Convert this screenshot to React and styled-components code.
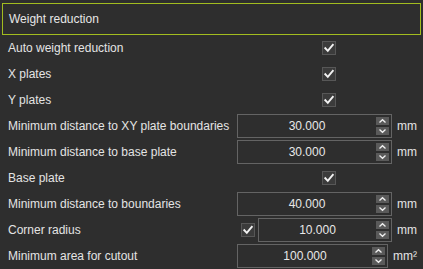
import React from "react";
import styled, { createGlobalStyle } from "styled-components";

const GlobalStyle = createGlobalStyle`
  html, body {
    margin: 0;
    padding: 0;
    background: #2e2e2e;
  }
  body {
    font-family: "Liberation Sans", Arial, sans-serif;
    font-size: 12px;
    color: #e4e4e4;
  }
`;

const Panel = styled.div`
  width: 423px;
  height: 269px;
  box-sizing: border-box;
  padding: 3px 2px 0 2px;
  background: #2e2e2e;
  overflow: hidden;
`;

const Header = styled.div`
  height: 32px;
  box-sizing: border-box;
  border: 1px solid #a2bc1f;
  padding-left: 6px;
  display: flex;
  align-items: center;
  color: #e6e6e6;
  font-size: 12px;
`;

const Form = styled.div`
  margin-top: 1px;
  padding: 0 4px 0 6px;
  display: grid;
  grid-template-columns: 229px 1fr;
  grid-auto-rows: 24px;
  row-gap: 2px;
`;

const Label = styled.div`
  display: flex;
  align-items: center;
  white-space: nowrap;
  color: #e4e4e4;
`;

const Control = styled.div`
  display: flex;
  align-items: center;
  gap: 5px;
  justify-content: ${(p) => (p.$center ? "center" : "flex-start")};
  padding-left: ${(p) => (p.$center ? "4px" : "0")};
`;

const CheckGroup = styled.div`
  flex: 1;
  display: flex;
  align-items: center;
  gap: 3px;
  padding-left: 4px;
  height: 100%;
`;

const CheckBox = styled.span`
  width: 14px;
  height: 14px;
  box-sizing: border-box;
  border: 1px solid #575757;
  background: #3b3b3b;
  display: inline-flex;
  align-items: center;
  justify-content: center;
  flex: none;
`;

const Spin = styled.div`
  flex: 1;
  height: 24px;
  box-sizing: border-box;
  border: 1px solid #646464;
  display: flex;
  align-items: center;
  padding-right: 2px;
  min-width: 0;
`;

const SpinValue = styled.span`
  flex: 1;
  text-align: center;
  color: #e8e8e8;
`;

const Arrows = styled.div`
  display: flex;
  flex-direction: column;
  gap: 2px;
`;

const ArrowButton = styled.span`
  width: 13px;
  height: 8px;
  background: #5a5a5a;
  display: flex;
  align-items: center;
  justify-content: center;
`;

const Unit = styled.span`
  color: #e4e4e4;
  white-space: nowrap;
`;

const Check = () => (
  <CheckBox>
    <svg width="12" height="12" viewBox="0 0 12 12">
      <path
        d="M2.3 6.2 L4.8 8.8 L9.8 2.8"
        fill="none"
        stroke="#f2f2f2"
        strokeWidth="1.9"
        strokeLinecap="square"
      />
    </svg>
  </CheckBox>
);

const Chevron = ({ down }) => (
  <svg width="9" height="6" viewBox="0 0 9 6">
    <path
      d={down ? "M1.5 1.5 L4.5 4.3 L7.5 1.5" : "M1.5 4.5 L4.5 1.7 L7.5 4.5"}
      fill="none"
      stroke="#f0f0f0"
      strokeWidth="1.3"
    />
  </svg>
);

const SpinBox = ({ value }) => (
  <Spin>
    <SpinValue>{value}</SpinValue>
    <Arrows>
      <ArrowButton>
        <Chevron />
      </ArrowButton>
      <ArrowButton>
        <Chevron down />
      </ArrowButton>
    </Arrows>
  </Spin>
);

const rows = [
  { label: "Auto weight reduction", type: "check" },
  { label: "X plates", type: "check" },
  { label: "Y plates", type: "check" },
  { label: "Minimum distance to XY plate boundaries", type: "spin", value: "30.000", unit: "mm" },
  { label: "Minimum distance to base plate", type: "spin", value: "30.000", unit: "mm" },
  { label: "Base plate", type: "check" },
  { label: "Minimum distance to boundaries", type: "spin", value: "40.000", unit: "mm" },
  { label: "Corner radius", type: "checkspin", value: "10.000", unit: "mm" },
  { label: "Minimum area for cutout", type: "spin", value: "100.000", unit: "mm²" },
];

export default function App() {
  return (
    <>
      <GlobalStyle />
      <Panel>
        <Header>Weight reduction</Header>
        <Form>
          {rows.map((r) => (
            <React.Fragment key={r.label}>
              <Label>{r.label}</Label>
              {r.type === "check" && (
                <Control $center>
                  <Check />
                </Control>
              )}
              {r.type === "spin" && (
                <Control>
                  <SpinBox value={r.value} />
                  <Unit>{r.unit}</Unit>
                </Control>
              )}
              {r.type === "checkspin" && (
                <Control>
                  <CheckGroup>
                    <Check />
                    <SpinBox value={r.value} />
                  </CheckGroup>
                  <Unit>{r.unit}</Unit>
                </Control>
              )}
            </React.Fragment>
          ))}
        </Form>
      </Panel>
    </>
  );
}
